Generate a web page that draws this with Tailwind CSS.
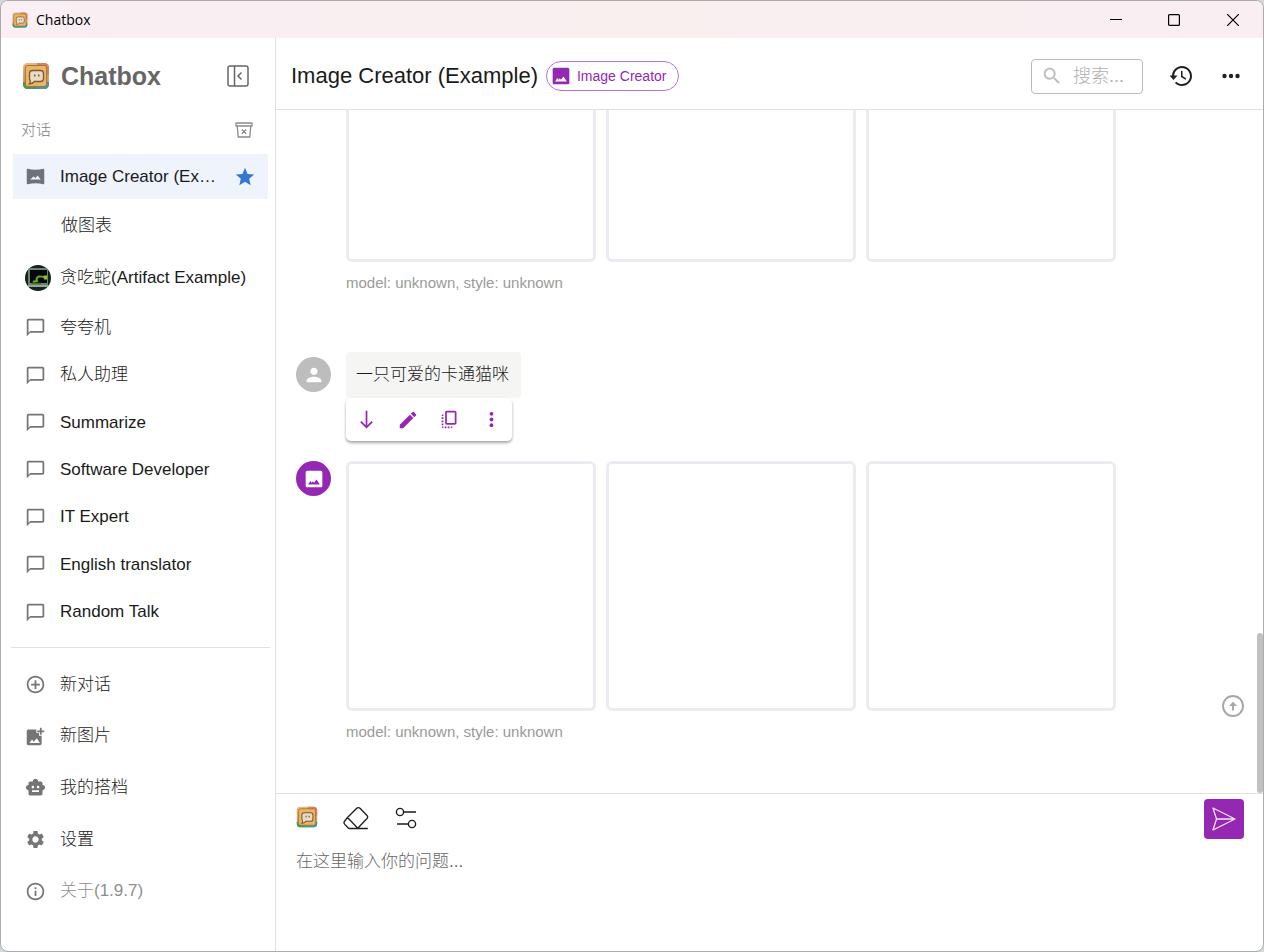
<!DOCTYPE html>
<html lang="zh-CN">
<head>
<meta charset="utf-8">
<meta name="viewport" content="width=device-width, initial-scale=1">
<title>Chatbox</title>
<script src="https://cdn.jsdelivr.net/npm/@tailwindcss/browser@4"></script>
</head>
<body class="h-screen overflow-hidden bg-[#d4d8d9] font-['Liberation_Sans','Noto_Sans_CJK_SC',sans-serif] text-[17px] font-light leading-6 text-[#1a1a1a]">
<svg class="absolute size-0" aria-hidden="true">
  <defs>
    <linearGradient id="rim" x1="0" y1="0" x2="0" y2="1"><stop offset="0" stop-color="#e2bd7c"/><stop offset=".75" stop-color="#c79e62"/><stop offset="1" stop-color="#4aa06a"/></linearGradient>
  </defs>
  <symbol id="logo" viewBox="0 0 28 28">
    <rect x="1" y="1" width="26" height="26" rx="4.500" fill="url(#rim)"/>
    <path d="M15 1h7.500A4.500 4.500 0 0 1 27 5.500V13h-4V5h-8z" fill="#d98261"/>
    <path d="M1 20h4l2 3h7v4H5.500A4.500 4.500 0 0 1 1 22.500z" fill="#459c58"/>
    <path d="M14 23h7l2-3h4v2.500a4.500 4.500 0 0 1-4.500 4.500H14z" fill="#4398a0"/>
    <rect x="3.300" y="3.500" width="21.400" height="21" rx="2.500" fill="#edb55f" stroke="#9b7048" stroke-width="1"/>
    <path d="M10.500 8.500h8a3 3 0 0 1 3 3v5a3 3 0 0 1-3 3h-6c-1.500 1.800-3 2.300-5 2.300 1-1 1-2 .7-3.300-.5-.6-.7-1.200-.7-2v-5a3 3 0 0 1 3-3z" fill="#e9dac3" stroke="#79583b" stroke-width="1.300"/>
    <path d="M12 12.500h1.500v2H12zM16 12.500h1.500v2H16z" fill="#78603f"/>
  </symbol>
  <symbol id="chat" viewBox="0 0 24 24"><path d="M20 2H4c-1.100 0-2 .9-2 2v18l4-4h14c1.100 0 2-.9 2-2V4c0-1.100-.9-2-2-2zm0 14H6l-2 2V4h16v12z"/></symbol>
  <symbol id="image" viewBox="0 0 24 24"><path d="M22 20V4c0-1.100-.9-2-2-2H4c-1.100 0-2 .9-2 2v16c0 1.100.9 2 2 2h16c1.100 0 2-.9 2-2zM5 18.500l2.500-4 1.700 2 1.300-1.700 1.500 1.700L15 12.500l4 6z"/></symbol>
</svg>
<div class="flex h-full flex-col overflow-hidden rounded-lg border border-[#a9abac] bg-white">
  <header class="flex h-[37px] shrink-0 items-center bg-gradient-to-r from-[#f9eff4] via-[#f9efef] to-[#f9eff3] pl-[11px] text-black">
    <svg class="size-4"><use href="#logo"/></svg>
    <span class="ml-2 flex-1 font-['Open_Sans','Noto_Sans',sans-serif] text-sm font-normal">Chatbox</span>
    <button aria-label="最小化" class="flex h-full w-[58px] items-center justify-center"><svg class="size-3" fill="none" stroke="currentColor"><path d="M0 5.500h12"/></svg></button>
    <button aria-label="最大化" class="flex h-full w-[58px] items-center justify-center"><svg class="size-3" fill="none" stroke="currentColor" stroke-width="1.200"><rect x=".6" y=".6" width="10.800" height="10.800" rx="1"/></svg></button>
    <button aria-label="关闭" class="flex h-full w-[60px] items-center justify-center"><svg class="size-3" fill="none" stroke="currentColor" stroke-width="1.200"><path d="m0 0 12 12M12 0 0 12"/></svg></button>
  </header>

  <div class="flex min-h-0 flex-1">
    <aside class="flex w-[275px] shrink-0 flex-col border-r border-[#e0e0e0]">
      <div class="flex h-[75px] shrink-0 items-center pl-[21px] pr-[26px]">
        <svg class="size-7"><use href="#logo"/></svg>
        <h1 class="ml-[11px] flex-1 text-[25px] font-bold leading-8 text-[#666]">Chatbox</h1>
        <button aria-label="收起侧栏"><svg class="size-[22px]" viewBox="0 0 22 22" fill="none" stroke="#666" stroke-width="1.500"><rect x="1" y="1" width="20" height="20" rx="2"/><path d="M7.500 1v20M14.500 7.500 11 11l3.500 3.500"/></svg></button>
      </div>
      <div class="flex h-[34px] shrink-0 items-center justify-between pl-5 pr-[22px] text-[15px] text-[#808080]">
        <h2>对话</h2>
        <button aria-label="清空对话列表"><svg class="size-[18px]" viewBox="0 0 18 18" fill="none" stroke="#8a8a8a" stroke-width="1.300" stroke-linejoin="round"><path d="M1 2h16v3H1zM2.200 5l1 11h11.600l1-11M6.900 8.500l4.200 4.200M11.100 8.500l-4.200 4.200"/></svg></button>
      </div>
      <nav class="mt-[7px] flex min-h-0 flex-1 flex-col pb-[11px] pl-3 pr-[7px]" aria-label="对话">
        <div class="flex h-[45px] shrink-0 items-center bg-[#eef3fc] pl-3 pr-3">
          <a href="#" class="flex min-w-0 flex-1 items-center"><svg class="size-[21px] shrink-0 text-[#6f7278]" viewBox="0 0 24 24" fill="currentColor"><path fill-rule="evenodd" d="M3.300 3.100C6 3.900 9 4.200 12 4.200s6-.3 8.700-1.100c.7-.2 1.300.3 1.300.9v16c0 .6-.6 1.100-1.300.9-2.700-.8-5.700-1.100-8.700-1.100s-6 .3-8.700 1.100c-.7.2-1.300-.3-1.300-.9V4c0-.6.600-1.100 1.300-.9zM6 15.800c4-.4 8-.4 12 0l-3.500-5-2.500 3L9.500 12z"/></svg>
          <span class="ml-[14px] w-[162px] truncate">Image Creator (Example)</span></a>
          <button aria-label="取消收藏"><svg class="size-[22px]" viewBox="0 0 24 24" fill="#3377d6"><path d="M12 17.270 18.180 21l-1.640-7.030L22 9.240l-7.190-.61L12 2 9.190 8.630 2 9.240l5.460 4.730L5.820 21z"/></svg></button>
        </div>
        <a href="#" class="mt-0.5 flex h-[50px] shrink-0 items-center pl-12">做图表</a>
        <a href="#" class="flex h-[53px] shrink-0 items-center pl-3">
          <svg class="-mr-0.5 size-[26px] shrink-0" viewBox="0 0 26 26"><clipPath id="round"><circle cx="13" cy="13" r="13"/></clipPath><g clip-path="url(#round)"><path fill="#15221c" d="M0 0h26v26H0z"/><path d="M3 3h20v19H3z" fill="#6b8574"/><path d="M5 5h17v13H5z" fill="#07070d"/><path d="M3 20h20v2H3z" fill="#93a98e"/><path d="M7 18.500h9" stroke="#486d27" stroke-width="1.500"/><path d="M8 17c1.500-1 3-.5 4-1-1-2 0-4 2-4.500 1.500-.4 2.500.5 5 .5" fill="none" stroke="#65a82f" stroke-width="2"/><path d="M18.500 10.500h3.500v4h-3z" fill="#9dbb2e"/></g></svg>
          <span class="ml-[11px] whitespace-nowrap">贪吃蛇(Artifact Example)</span></a>
        <div class="grid min-h-0 flex-1 grid-rows-7">
          <a href="#" class="flex items-center gap-[14px] pl-3"><svg class="size-[21px] fill-[#757575]"><use href="#chat"/></svg>夸夸机</a>
          <a href="#" class="flex items-center gap-[14px] pl-3"><svg class="size-[21px] fill-[#757575]"><use href="#chat"/></svg>私人助理</a>
          <a href="#" class="flex items-center gap-[14px] pl-3"><svg class="size-[21px] fill-[#757575]"><use href="#chat"/></svg>Summarize</a>
          <a href="#" class="flex items-center gap-[14px] pl-3"><svg class="size-[21px] fill-[#757575]"><use href="#chat"/></svg>Software Developer</a>
          <a href="#" class="flex items-center gap-[14px] pl-3"><svg class="size-[21px] fill-[#757575]"><use href="#chat"/></svg>IT Expert</a>
          <a href="#" class="flex items-center gap-[14px] pl-3"><svg class="size-[21px] fill-[#757575]"><use href="#chat"/></svg>English translator</a>
          <a href="#" class="flex items-center gap-[14px] pl-3"><svg class="size-[21px] fill-[#757575]"><use href="#chat"/></svg>Random Talk</a>
        </div>
      </nav>
      <div class="ml-2.5 mr-[5px] border-t border-[#e0e0e0] pb-[34px] pl-3.5 pt-[11px]">
        <div class="grid h-[258px] grid-rows-5">
          <button class="flex items-center gap-[14px]"><svg class="size-[21px]" viewBox="0 0 24 24" fill="#757575"><path d="M13 7h-2v4H7v2h4v4h2v-4h4v-2h-4V7zm-1-5C6.480 2 2 6.480 2 12s4.480 10 10 10 10-4.480 10-10S17.520 2 12 2zm0 18c-4.410 0-8-3.590-8-8s3.590-8 8-8 8 3.590 8 8-3.590 8-8 8z"/></svg>新对话</button>
          <button class="flex items-center gap-[14px]"><svg class="size-[21px]" viewBox="0 0 24 24" fill="#757575"><path d="M19 7v2.990s-1.990.01-2 0V7h-3s.01-1.990 0-2h3V2h2v3h3v2h-3zm-3 4V8h-3V4H4c-1.100 0-2 .9-2 2v14c0 1.100.9 2 2 2h13c1.100 0 2-.9 2-2v-9h-3zM5 19.500l3-4 2 2.500 3.500-4 3.500 5.500H5z"/></svg>新图片</button>
          <button class="flex items-center gap-[14px]"><svg class="size-[21px]" viewBox="0 0 24 24" fill="#757575"><path d="M20 9V7c0-1.100-.9-2-2-2h-3c0-1.660-1.340-3-3-3S9 3.340 9 5H6c-1.100 0-2 .9-2 2v2c-1.660 0-3 1.340-3 3s1.340 3 3 3v4c0 1.100.9 2 2 2h12c1.100 0 2-.9 2-2v-4c1.660 0 3-1.340 3-3s-1.340-3-3-3zM7.500 11.500c0-.83.67-1.500 1.500-1.500s1.500.67 1.500 1.500S9.830 13 9 13s-1.500-.67-1.500-1.500zM16 17H8v-2h8v2zm-1-4c-.83 0-1.500-.67-1.500-1.500S14.170 10 15 10s1.500.67 1.500 1.500S15.830 13 15 13z"/></svg>我的搭档</button>
          <button class="flex items-center gap-[14px]"><svg class="size-[21px]" viewBox="0 0 24 24" fill="#757575"><path d="M19.140 12.940c.04-.3.06-.61.06-.94 0-.32-.02-.64-.07-.94l2.030-1.580c.18-.14.23-.41.12-.61l-1.920-3.320c-.12-.22-.37-.29-.59-.22l-2.390.96c-.5-.38-1.030-.7-1.620-.94l-.36-2.540c-.04-.24-.24-.41-.48-.41h-3.840c-.24 0-.43.17-.47.41l-.36 2.540c-.59.24-1.130.57-1.620.94l-2.390-.96c-.22-.08-.47 0-.59.22L2.740 8.870c-.12.21-.08.47.12.61l2.030 1.580c-.05.3-.09.63-.09.94s.02.64.07.94l-2.030 1.580c-.18.14-.23.41-.12.61l1.920 3.320c.12.22.37.29.59.22l2.390-.96c.5.38 1.030.7 1.620.94l.36 2.540c.05.24.24.41.48.41h3.840c.24 0 .44-.17.47-.41l.36-2.540c.59-.24 1.130-.56 1.620-.94l2.390.96c.22.08.47 0 .59-.22l1.920-3.320c.12-.22.07-.47-.12-.61l-2.010-1.580zM12 15.600c-1.980 0-3.600-1.620-3.600-3.600s1.620-3.600 3.600-3.600 3.600 1.620 3.600 3.600-1.620 3.600-3.600 3.600z"/></svg>设置</button>
          <button class="flex items-center gap-[14px] text-[#8f8f8f]"><svg class="size-[21px]" viewBox="0 0 24 24" fill="#757575"><path d="M11 7h2v2h-2zm0 4h2v6h-2zm1-9C6.480 2 2 6.480 2 12s4.480 10 10 10 10-4.480 10-10S17.520 2 12 2zm0 18c-4.410 0-8-3.590-8-8s3.590-8 8-8 8 3.590 8 8-3.590 8-8 8z"/></svg>关于(1.9.7)</button>
        </div>
      </div>
    </aside>

    <main class="flex min-w-0 flex-1 flex-col">
      <div class="flex h-[72px] shrink-0 items-center border-b border-[#e0e0e0] pl-[15px] pr-5 pt-[5px]">
        <h2 class="whitespace-nowrap text-[22px] leading-7">Image Creator (Example)</h2>
        <button class="ml-2 flex h-[30px] items-center gap-1.5 whitespace-nowrap rounded-full border border-[#bf72ce] pl-1 pr-3 text-sm text-[#9528b3]"><svg class="size-5 fill-[#9528b3]"><use href="#image"/></svg>Image Creator</button>
        <div class="ml-auto flex items-center">
          <label class="flex h-[35px] w-28 items-center gap-2.5 rounded border border-[#bcbcbc] pl-[9px]"><svg class="size-[22px] shrink-0" viewBox="0 0 24 24" fill="#bdbdbd"><path d="M15.500 14h-.79l-.28-.27C15.410 12.590 16 11.110 16 9.500 16 5.910 13.090 3 9.500 3S3 5.910 3 9.500 5.910 16 9.500 16c1.610 0 3.090-.59 4.230-1.570l.27.28v.79l5 4.990L20.490 19l-4.990-5zm-6 0C7.010 14 5 11.990 5 9.500S7.010 5 9.500 5 14 7.010 14 9.500 11.990 14 9.500 14z"/></svg><input type="text" aria-label="搜索" placeholder="搜索..." class="w-full min-w-0 text-lg outline-none placeholder:text-[#b0b0b0]"></label>
          <button aria-label="历史" class="ml-[26px]"><svg class="size-6" viewBox="0 0 24 24" fill="#212121"><path d="M13 2C7.500 2 3.300 6.300 3 11.500H.5L4.500 16l4-4.500H5.200C5.500 7.400 8.800 4 13 4s8 3.600 8 8-3.600 8-8 8c-2.200 0-4.200-.9-5.700-2.300l-1.400 1.400C7.700 20.900 10.200 22 13 22c5.500 0 10-4.500 10-10S18.500 2 13 2zm-1 5v6l4.500 2.700.8-1.300-3.800-2.300V7H12z"/></svg></button>
          <button aria-label="更多" class="ml-[26px]"><svg class="size-6" viewBox="0 0 24 24" fill="#212121"><circle cx="5.500" cy="12" r="2.200"/><circle cx="12" cy="12" r="2.200"/><circle cx="18.500" cy="12" r="2.200"/></svg></button>
        </div>
      </div>

      <section class="relative flex min-h-0 flex-1 flex-col justify-end overflow-hidden" aria-label="消息">
        <div class="shrink-0 pl-[70px]">
          <div class="flex gap-2.5">
            <div class="size-[250px] rounded-md border-[3px] border-[#ebecf1]"></div>
            <div class="size-[250px] rounded-md border-[3px] border-[#ebecf1]"></div>
            <div class="size-[250px] rounded-md border-[3px] border-[#ebecf1]"></div>
          </div>
          <p class="mt-[9px] text-[15px] text-[#9a9a9a]">model: unknown, style: unknown</p>
        </div>
        <div class="mt-[57px] flex shrink-0 gap-[15px] pl-5">
          <div class="mt-[5px] flex size-[35px] items-center justify-center rounded-full bg-[#bdbdbd]"><svg class="size-[22px]" viewBox="0 0 24 24" fill="#fff"><path d="M12 12c2.210 0 4-1.790 4-4s-1.790-4-4-4-4 1.790-4 4 1.790 4 4 4zm0 2c-2.670 0-8 1.340-8 4v2h16v-2c0-2.660-5.330-4-8-4z"/></svg></div>
          <div class="flex flex-col items-start">
            <p class="flex h-[46px] items-center rounded bg-[#f5f5f4] px-2.5 pr-3">一只可爱的卡通猫咪</p>
            <div class="flex h-[43px] items-center rounded-[5px] bg-white text-[#9528b3] shadow-[0_2px_3px_rgba(0,0,0,.35)]">
              <button aria-label="跳到底部" class="flex w-[41px] justify-center"><svg class="size-[21px]" viewBox="0 0 24 24" fill="none" stroke="currentColor" stroke-width="2"><path d="M12 2v18.500M5.500 14.500l6.500 6.500 6.500-6.500"/></svg></button>
              <button aria-label="编辑" class="flex w-[42px] justify-center"><svg class="size-[22px]" viewBox="0 0 24 24" fill="currentColor"><path d="M3 17.250V21h3.750L17.810 9.940l-3.750-3.750L3 17.250zM20.710 7.040c.39-.39.39-1.020 0-1.410l-2.340-2.340a.9959.9959 0 0 0-1.410 0l-1.830 1.830 3.750 3.750 1.830-1.830z"/></svg></button>
              <button aria-label="复制" class="flex w-[41px] justify-center"><svg class="size-[21px]" viewBox="0 0 24 24" fill="currentColor"><path d="M18 2H9c-1.100 0-2 .9-2 2v12c0 1.100.9 2 2 2h9c1.100 0 2-.9 2-2V4c0-1.100-.9-2-2-2zm0 14H9V4h9v12zM3 15v-2h2v2H3zm0-5.500h2v2H3v-2zM10 20h2v2h-2v-2zm-7-1.500v-2h2v2H3zM5 22c-1.100 0-2-.9-2-2h2v2zm3.500 0h-2v-2h2v2zm5 0v-2h2c0 1.100-.9 2-2 2zM5 6v2H3c0-1.100.9-2 2-2z"/></svg></button>
              <button aria-label="更多操作" class="flex w-[42px] justify-center"><svg class="size-[21px]" viewBox="0 0 24 24" fill="currentColor"><circle cx="12" cy="5.500" r="2.200"/><circle cx="12" cy="12" r="2.200"/><circle cx="12" cy="18.500" r="2.200"/></svg></button>
            </div>
          </div>
        </div>
        <div class="mt-5 flex shrink-0 gap-[15px] pb-[49px] pl-5">
          <div class="flex size-[35px] items-center justify-center rounded-full bg-[#9528b3]"><svg class="size-5 fill-white"><use href="#image"/></svg></div>
          <div>
            <div class="flex gap-2.5">
              <div class="size-[250px] rounded-md border-[3px] border-[#ebecf1]"></div>
              <div class="size-[250px] rounded-md border-[3px] border-[#ebecf1]"></div>
              <div class="size-[250px] rounded-md border-[3px] border-[#ebecf1]"></div>
            </div>
            <p class="mt-[9px] text-[15px] text-[#9a9a9a]">model: unknown, style: unknown</p>
          </div>
        </div>
        <button aria-label="回到顶部" class="absolute bottom-[75px] right-[18px]"><svg class="size-6" viewBox="0 0 24 24" fill="none" stroke="#a6a6a6" stroke-width="1.900"><circle cx="12" cy="12" r="10"/><path d="M12 16.500v-6"/><path d="m8 12 4-4.200 4 4.200z" fill="#a6a6a6" stroke="none"/></svg></button>
        <div class="absolute bottom-0 right-0 h-40 w-1.5 rounded-[3px] bg-[#c1c1c1]"></div>
      </section>

      <form class="flex h-[158px] shrink-0 flex-col border-t border-[#e0e0e0] pl-5 pr-[19px] pt-[5px]">
        <div class="flex h-10 items-start">
          <button type="button" aria-label="菜单" class="mt-[7px]"><svg class="size-[22px]"><use href="#logo"/></svg></button>
          <button type="button" aria-label="清除上下文" class="ml-[25px] mt-[7px]"><svg class="size-[26px]" viewBox="0 0 26 26" fill="none" stroke="#1c1c1c" stroke-width="1.300" stroke-linejoin="round"><path d="M14.500 22.500h10.300M6.500 22.500h8L24 12.500c.9-1 .9-2 0-3L17 2.300c-1-1-2.300-1-3.300 0L4.500 11.500 1.700 15c-.9 1.100-.8 2.400.1 3.400l3.200 3.400c.4.500.9.700 1.500.7zM4.500 11.500l10.300 10.800"/></svg></button>
          <button type="button" aria-label="设置" class="ml-[26px] mt-[8px]"><svg class="size-[22px]" viewBox="0 0 22 22" fill="none" stroke="#1c1c1c" stroke-width="1.400"><circle cx="5" cy="5" r="3.600"/><path d="M8.600 5H21M2 17h11.400"/><circle cx="17" cy="17" r="3.600"/></svg></button>
          <button type="submit" aria-label="发送" class="ml-auto flex size-10 items-center justify-center rounded bg-[#9528b3]"><svg class="size-6" viewBox="0 0 24 24" fill="none" stroke="#f4e3f8" stroke-width="1.300" stroke-linejoin="round"><path d="M1 1 23 12 1 23l3.500-11zM4.500 12H23"/></svg></button>
        </div>
        <textarea aria-label="在这里输入你的问题" placeholder="在这里输入你的问题..." class="mt-[11px] min-h-0 flex-1 resize-none outline-none placeholder:text-[#666]"></textarea>
      </form>
    </main>
  </div>
</div>
</body>
</html>
